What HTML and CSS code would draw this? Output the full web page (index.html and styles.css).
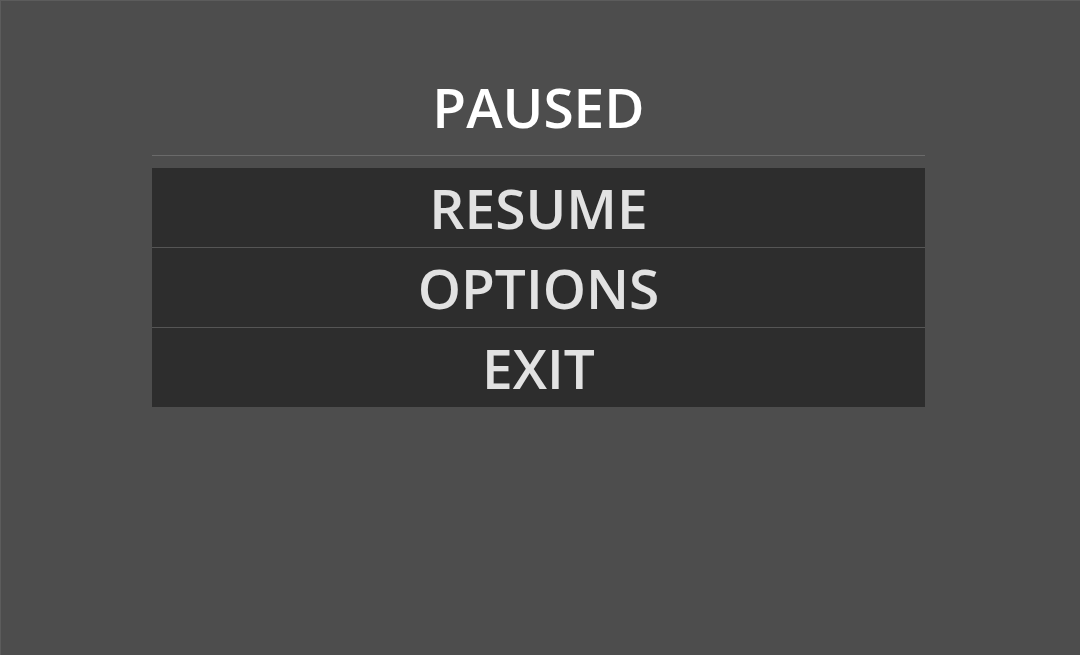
FILE: index.html
```html
<!DOCTYPE html>
<html>
<head>
<meta charset="utf-8">
<link rel="stylesheet" href="styles.css">
</head>
<body>
<div class="screen">
  <div class="menu">
    <h1 class="title">PAUSED</h1>
    <div class="rule"></div>
    <div class="buttons">
      <div class="btn">RESUME</div>
      <div class="btn">OPTIONS</div>
      <div class="btn">EXIT</div>
    </div>
  </div>
</div>
</body>
</html>
```

FILE: styles.css
```css
html, body {
  margin: 0;
  padding: 0;
  height: 100%;
  background: #4d4d4d;
}
.screen {
  box-sizing: border-box;
  height: 100%;
  border-top: 1px solid #5c5c5c;
  border-left: 1px solid #5c5c5c;
  padding-top: 78px;
  font-family: "Open Sans", "Noto Sans", sans-serif;
}
.menu {
  width: 773px;
  margin-left: 151px;
  display: flex;
  flex-direction: column;
}
.title {
  margin: 0;
  font-size: 55px;
  line-height: 56px;
  font-weight: 600;
  color: #ffffff;
  text-align: center;
}
.rule {
  height: 1px;
  background: #6a6a6a;
  margin-top: 20px;
  margin-bottom: 12px;
}
.buttons {
  display: flex;
  flex-direction: column;
  gap: 1px;
  background: #555555;
}
.btn {
  height: 79px;
  line-height: 79px;
  background: #2d2d2d;
  color: #e2e2e2;
  font-size: 55px;
  font-weight: 600;
  text-align: center;
}
```
